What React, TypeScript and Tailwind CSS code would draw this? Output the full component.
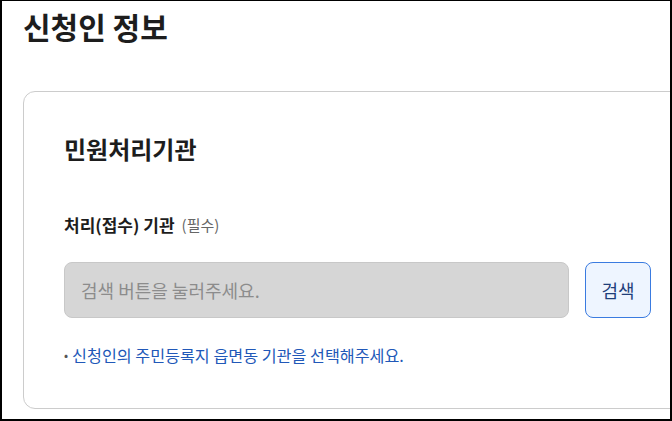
import React from 'react';

export default function App() {
  return (
    <div className="w-[672px] h-[421px] overflow-hidden bg-white border-t border-l-2 border-r-2 border-b-2 border-black font-['Noto_Sans_CJK_KR',sans-serif] text-[#1d1d1d]">
      <h1 className="pl-[21px] pt-[7px] text-[30px] leading-[36px] font-bold">신청인 정보</h1>

      <section className="ml-[21px] mt-[47px] w-[700px] h-[318px] rounded-[12px] border border-[#cccccc] pl-[40px] pt-[41px]">
        <h2 className="text-[24px] leading-[32px] font-bold">민원처리기관</h2>

        <div className="mt-[48px] flex items-center gap-[7px]">
          <span className="text-[17px] leading-[24px] font-bold">처리(접수) 기관</span>
          <span className="text-[15px] leading-[24px] text-[#666666]">(필수)</span>
        </div>

        <div className="mt-[25px] flex items-center gap-[16px]">
          <div className="w-[505px] h-[56px] rounded-[8px] border border-[#c8c8c8] bg-[#d6d6d6] flex items-center pl-[16px] text-[18px] text-[#8c8c8c]">
            검색 버튼을 눌러주세요.
          </div>
          <button className="w-[66px] h-[56px] rounded-[8px] border border-[#3a7be0] bg-[#eef5ff] text-[18px] text-[#1f3f7a]">
            검색
          </button>
        </div>

        <p className="mt-[25px] flex items-center gap-[4px] text-[16.2px] leading-[24px]">
          <span className="text-[#555555] text-[12px]">•</span>
          <span className="text-[#2158b8]">신청인의 주민등록지 읍면동 기관을 선택해주세요.</span>
        </p>
      </section>
    </div>
  );
}
